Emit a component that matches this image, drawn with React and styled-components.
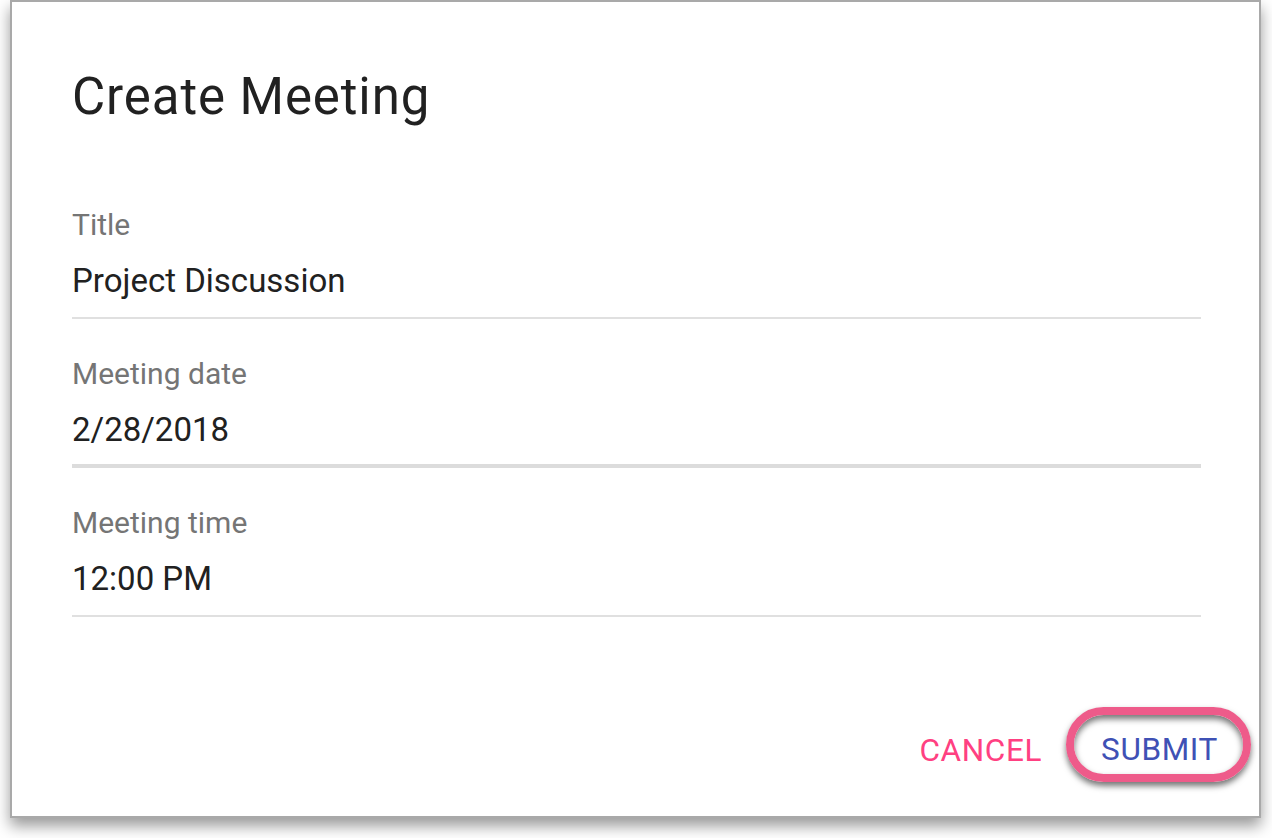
import React from "react";
import styled, { createGlobalStyle } from "styled-components";

const GlobalStyle = createGlobalStyle`
  html, body {
    margin: 0;
    padding: 0;
    min-height: 100%;
    background: #ffffff;
    font-family: Roboto, "Liberation Sans", Arial, sans-serif;
  }
`;

const Page = styled.div`
  min-height: 838px;
`;

const Dialog = styled.div`
  box-sizing: border-box;
  margin-left: 10px;
  width: 1251px;
  height: 818px;
  background: #ffffff;
  border: 2px solid #a9a9a9;
  box-shadow: 0 8px 14px rgba(0, 0, 0, 0.4);
  display: flex;
  flex-direction: column;
  padding: 65px 58px 34px 60px;
`;

const Heading = styled.h2`
  margin: 0 0 81px;
  font-size: 51px;
  line-height: 60px;
  font-weight: 400;
  letter-spacing: 0.9px;
  color: #212121;
`;

const Field = styled.div`
  display: flex;
  flex-direction: column;
  border-bottom: ${(p) => (p.$active ? "4px solid #dcdcdc" : "2px solid #e0e0e0")};

  & + & {
    margin-top: 38.5px;
  }
`;

const Label = styled.label`
  font-size: 30px;
  line-height: 34px;
  color: #757575;
  margin-bottom: 19px;
`;

const Value = styled.div`
  font-size: 33px;
  line-height: 40px;
  color: #212121;
  padding-bottom: ${(p) => (p.$active ? "13.5px" : "15.5px")};
`;

const Actions = styled.div`
  margin-top: auto;
  display: flex;
  justify-content: flex-end;
  align-items: center;
  gap: 24px;
  margin-right: -50px;
`;

const TextButton = styled.button`
  box-sizing: border-box;
  background: none;
  border: none;
  font-family: inherit;
  font-size: 31.5px;
  line-height: 36px;
  letter-spacing: 0.6px;
  text-transform: uppercase;
  color: ${(p) => p.$color};
  padding: 12px 0 0;
  cursor: pointer;
`;

const HighlightButton = styled(TextButton)`
  width: 185px;
  height: 75px;
  border: 8px solid #ee5b8a;
  border-radius: 38px;
  padding: 17px 0 6px 2px;
  display: flex;
  justify-content: center;
  box-shadow: 0 4px 6px rgba(0, 0, 0, 0.55), inset 0 4px 6px rgba(0, 0, 0, 0.55);
`;

const fields = [
  { label: "Title", value: "Project Discussion" },
  { label: "Meeting date", value: "2/28/2018", active: true },
  { label: "Meeting time", value: "12:00 PM" },
];

export default function App() {
  return (
    <Page>
      <GlobalStyle />
      <Dialog>
        <Heading>Create Meeting</Heading>
        {fields.map((f) => (
          <Field key={f.label} $active={f.active}>
            <Label>{f.label}</Label>
            <Value $active={f.active}>{f.value}</Value>
          </Field>
        ))}
        <Actions>
          <TextButton $color="#ff4081">Cancel</TextButton>
          <HighlightButton $color="#3f51b5">Submit</HighlightButton>
        </Actions>
      </Dialog>
    </Page>
  );
}
